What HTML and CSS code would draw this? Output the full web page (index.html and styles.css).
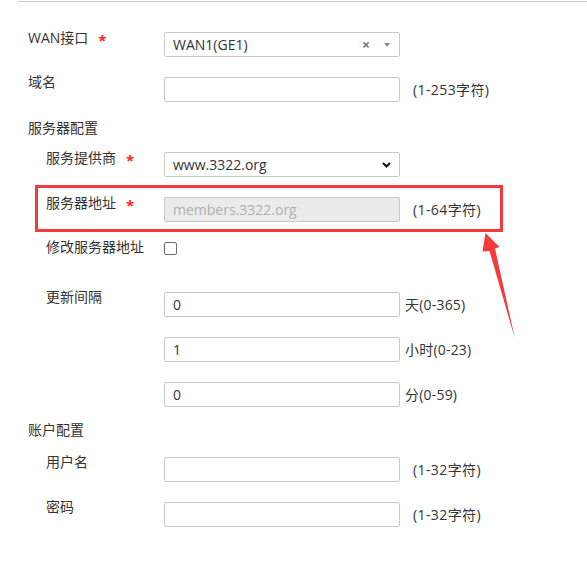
FILE: index.html
```html
<!DOCTYPE html>
<html lang="zh-CN">
<head>
<meta charset="utf-8">
<title>DDNS</title>
<link rel="stylesheet" href="styles.css">
</head>
<body>
<div class="page">
  <div class="topline"></div>
  <form class="form">
    <div class="row">
      <div class="label">WAN接口<span class="req">*</span></div>
      <div class="select2">
        <span class="sel-text">WAN1(GE1)</span>
        <span class="sel-clear">×</span>
        <span class="sel-arrow"></span>
      </div>
    </div>
    <div class="row">
      <div class="label">域名</div>
      <input class="input" type="text" value="">
      <span class="hint">(1-253字符)</span>
    </div>

    <div class="section-title">服务器配置</div>
    <div class="row sub">
      <div class="label">服务提供商<span class="req">*</span></div>
      <div class="select">
        <span class="sel-text">www.3322.org</span>
        <svg class="chev" width="9" height="6" viewBox="0 0 9 6"><path d="M1 1 L4.5 4.5 L8 1" fill="none" stroke="#111" stroke-width="2"/></svg>
      </div>
    </div>
    <div class="row sub">
      <div class="label">服务器地址<span class="req">*</span></div>
      <input class="input" type="text" value="members.3322.org" disabled>
      <span class="hint">(1-64字符)</span>
    </div>
    <div class="row sub row-check">
      <div class="label">修改服务器地址</div>
      <input class="check" type="checkbox">
    </div>
    <div class="row sub">
      <div class="label">更新间隔</div>
      <input class="input" type="text" value="0">
      <span class="unit">天(0-365)</span>
    </div>
    <div class="row sub">
      <div class="label"></div>
      <input class="input" type="text" value="1">
      <span class="unit">小时(0-23)</span>
    </div>
    <div class="row sub">
      <div class="label"></div>
      <input class="input" type="text" value="0">
      <span class="unit">分(0-59)</span>
    </div>

    <div class="section-title second">账户配置</div>
    <div class="row sub">
      <div class="label">用户名</div>
      <input class="input" type="text" value="">
      <span class="hint">(1-32字符)</span>
    </div>
    <div class="row sub">
      <div class="label">密码</div>
      <input class="input" type="password" value="">
      <span class="hint">(1-32字符)</span>
    </div>
  </form>

  <div class="highlight"></div>
  <svg class="arrow" width="587" height="562" viewBox="0 0 587 562">
    <polygon points="485.5,233 499.5,247 495,248.5 515,339 489.5,251 482.5,251.5" fill="#f43a3a"/>
  </svg>
</div>
</body>
</html>
```

FILE: styles.css
```css
html, body {
  margin: 0;
  padding: 0;
  background: #fff;
}

.page {
  position: relative;
  width: 587px;
  height: 562px;
  overflow: hidden;
  font-family: "Open Sans", "Noto Sans CJK SC", sans-serif;
  font-size: 14px;
  color: #333;
}

.topline {
  margin: 1px 0 0 18px;
  border-top: 1px solid #cfcfcf;
}

.form {
  padding: 30px 0 0 28px;
  margin: 0;
}

.row {
  display: flex;
  align-items: flex-start;
  height: 25px;
  margin-bottom: 20px;
}

.row-check {
  margin-bottom: 25px;
}

.label {
  width: 136px;
  flex: none;
  box-sizing: border-box;
  line-height: 20px;
  margin-top: -5px;
  white-space: nowrap;
}

.sub .label {
  padding-left: 18px;
}

.req {
  color: #f22;
  margin-left: 10px;
  font-size: 15px;
  font-weight: bold;
  position: relative;
  top: 3px;
}

.section-title {
  line-height: 16px;
  height: 16px;
  margin-top: -2px;
  margin-bottom: 16px;
}

.section-title.second {
  margin-top: -5px;
  margin-bottom: 19px;
}

.input,
.select,
.select2 {
  width: 236px;
  height: 25px;
  box-sizing: border-box;
  border: 1px solid #c9c9c9;
  border-radius: 2px;
  background: #fff;
  margin: 0;
  padding: 0 8px;
  font-family: inherit;
  font-size: 14px;
  color: #333;
  outline: none;
  flex: none;
}

.input:disabled {
  background: #ebebeb;
  color: #b0b0b0;
  -webkit-text-fill-color: #b0b0b0;
}

.select,
.select2 {
  display: flex;
  align-items: center;
}

.sel-text {
  flex: 1;
  line-height: 23px;
}

.sel-clear {
  color: #777;
  font-weight: bold;
  font-size: 14px;
  margin-right: 14px;
  line-height: 23px;
}

.sel-arrow {
  width: 0;
  height: 0;
  border-left: 3px solid transparent;
  border-right: 3px solid transparent;
  border-top: 4px solid #8a8a8a;
  margin-right: 1px;
}

.chev {
  display: block;
}

.hint {
  margin-left: 13px;
  line-height: 25px;
  letter-spacing: 0.4px;
  white-space: nowrap;
}

.unit {
  margin-left: 5px;
  line-height: 25px;
  letter-spacing: 0.2px;
  white-space: nowrap;
}

.check {
  -webkit-appearance: none;
  appearance: none;
  width: 13px;
  height: 13px;
  box-sizing: border-box;
  border: 1px solid #6d6d6d;
  border-radius: 2px;
  background: #fff;
  margin: 0;
  flex: none;
}

.highlight {
  position: absolute;
  left: 35px;
  top: 185px;
  width: 468px;
  height: 47px;
  box-sizing: border-box;
  border: 3px solid #f43a3a;
  pointer-events: none;
}

.arrow {
  position: absolute;
  left: 0;
  top: 0;
  pointer-events: none;
}
```
